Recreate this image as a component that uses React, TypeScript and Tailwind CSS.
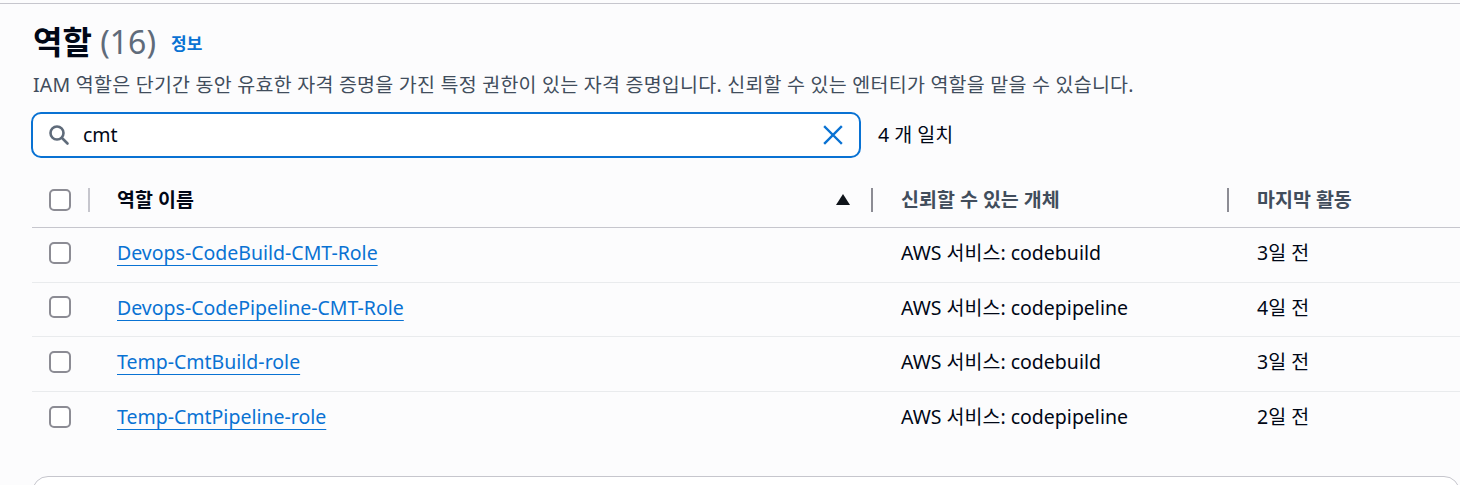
import React from "react";

const rows = [
  { name: "Devops-CodeBuild-CMT-Role", trust: "AWS 서비스: codebuild", last: "3일 전" },
  { name: "Devops-CodePipeline-CMT-Role", trust: "AWS 서비스: codepipeline", last: "4일 전" },
  { name: "Temp-CmtBuild-role", trust: "AWS 서비스: codebuild", last: "3일 전" },
  { name: "Temp-CmtPipeline-role", trust: "AWS 서비스: codepipeline", last: "2일 전" },
];

function Checkbox() {
  return <div className="w-[22px] h-[22px] rounded-[5px] border-2 border-[#8c8c94] bg-white" />;
}

export default function App() {
  return (
    <div
      className="w-[1460px] h-[485px] overflow-hidden bg-[#fcfcfd] text-[#000716]"
      style={{ fontFamily: '"Noto Sans", "Noto Sans CJK KR", sans-serif' }}
    >
      <div className="h-[3px]" />
      <div className="border-t border-[#c6c6cd]" />
      <div className="pl-[33px]">
        <div className="flex items-center gap-[15px] pt-[18px]">
          <h2 className="text-[32px] font-bold leading-[40px] text-[#000716]">
            역할 <span className="font-normal text-[#5f6b7a]">(16)</span>
          </h2>
          <span className="text-[17px] font-bold text-[#0972d3] mt-[4px]">정보</span>
        </div>
        <p className="text-[19.5px] leading-[26px] tracking-[0.25px] text-[#414d5c] mt-[10px] whitespace-nowrap">
          IAM 역할은 단기간 동안 유효한 자격 증명을 가진 특정 권한이 있는 자격 증명입니다. 신뢰할 수 있는 엔터티가 역할을 맡을 수 있습니다.
        </p>
      </div>
      <div className="flex items-center pl-[31px] mt-[14px] gap-[17px]">
        <div className="w-[830px] h-[46px] rounded-[10px] border-2 border-[#0972d3] bg-white flex items-center pl-[15px] pr-[16px]">
          <svg width="22" height="22" viewBox="0 0 22 22" fill="none" stroke="#5f6b7a" strokeWidth="2.6" strokeLinecap="round">
            <circle cx="9" cy="9" r="6.5" />
            <path d="M14 14 L19.5 19.5" />
          </svg>
          <span className="ml-[13px] text-[19.5px] text-[#000716]">cmt</span>
          <div className="flex-1" />
          <svg width="20" height="20" viewBox="0 0 20 20" fill="none" stroke="#0972d3" strokeWidth="2.4" strokeLinecap="square">
            <path d="M2 2 L18 18 M18 2 L2 18" />
          </svg>
        </div>
        <span className="text-[19.5px] text-[#000716]">4 개 일치</span>
      </div>
      <div className="ml-[32px] mt-[15px]">
        <div className="grid grid-cols-[56px_783px_356px_1fr] h-[55px] border-b border-[#c6c6cd] items-center">
          <div className="pl-[17px] flex items-center">
            <Checkbox />
          </div>
          <div className="flex items-center h-[24px] border-l-2 border-[#c6c6cd] pl-[27px] pr-[21px]">
            <span className="text-[19.5px] font-bold text-[#000716]">역할 이름</span>
            <div className="flex-1" />
            <svg width="14" height="12" viewBox="0 0 14 12">
              <path d="M7 0 L14 11 L0 11 Z" fill="#0f141a" />
            </svg>
          </div>
          <div className="flex items-center h-[24px] border-l-2 border-[#8c8c94] pl-[28px]">
            <span className="text-[19.5px] font-bold text-[#414d5c]">신뢰할 수 있는 개체</span>
          </div>
          <div className="flex items-center h-[24px] border-l-2 border-[#8c8c94] pl-[28px]">
            <span className="text-[19.5px] font-bold text-[#414d5c]">마지막 활동</span>
          </div>
        </div>
        {rows.map((r, i) => (
          <div
            key={r.name}
            className={`grid grid-cols-[56px_783px_356px_1fr] h-[54.5px] items-center pb-[4px] ${
              i < rows.length - 1 ? "border-b border-[#e9ebed]" : ""
            }`}
          >
            <div className="pl-[17px] flex items-center">
              <Checkbox />
            </div>
            <div className="pl-[29px]">
              <a className="text-[19.5px] text-[#0972d3] underline underline-offset-[5px] decoration-1 cursor-pointer">
                {r.name}
              </a>
            </div>
            <div className="pl-[30px] text-[19.5px] text-[#000716]">{r.trust}</div>
            <div className="pl-[30px] text-[19.5px] text-[#000716]">{r.last}</div>
          </div>
        ))}
        <div className="mt-[30px] h-[40px] rounded-t-[16px] border border-[#c6c6cd] bg-white" />
      </div>
    </div>
  );
}
